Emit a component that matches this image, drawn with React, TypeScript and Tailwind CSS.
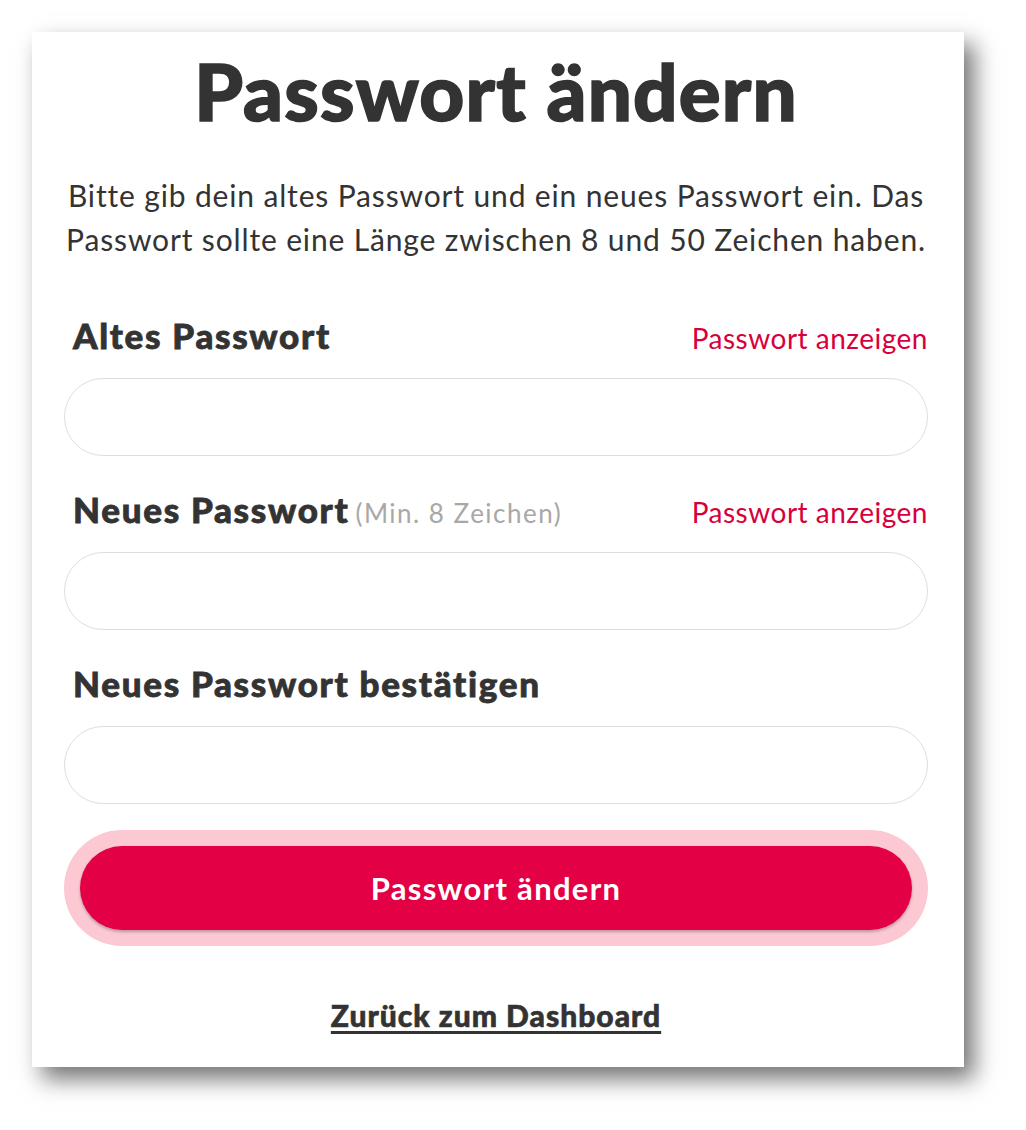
import React from 'react';

const font = { fontFamily: 'Lato, "Noto Sans", sans-serif' };

interface FieldProps {
  label: string;
  hint?: string;
  showToggle?: boolean;
}

const PasswordField: React.FC<FieldProps> = ({ label, hint, showToggle }) => {
  return (
    <div className="flex flex-col">
      <div className="flex items-baseline justify-between pl-[9px] h-[40px]">
        <div className="leading-[40px] whitespace-nowrap">
          <span className="text-[35px] font-black text-[#333] tracking-[1.7px] [-webkit-text-stroke:0.8px_#333]">
            {label}
          </span>
          {hint && <span className="ml-[6px] text-[26px] text-[#a8a8a8] tracking-[1.5px]">{hint}</span>}
        </div>
        {showToggle && (
          <button type="button" className="text-[28px] leading-[40px] text-[#d8003c] tracking-[0.5px]">
            Passwort anzeigen
          </button>
        )}
      </div>
      <input
        type="password"
        className="mt-[23px] h-[78px] w-full rounded-full border border-[#dedede] bg-white px-8 text-[26px] outline-none"
      />
    </div>
  );
};

export default function App() {
  return (
    <div className="min-h-screen bg-white p-8" style={font}>
      <div className="w-[932px] h-[1035px] bg-white pl-8 pr-9 pt-[20px] shadow-[10px_12px_22px_rgba(0,0,0,0.55)]">
        <h1 className="text-center text-[78px] leading-[78px] font-black text-[#333] tracking-[1.2px] [-webkit-text-stroke:1.6px_#333]">
          Passwort ändern
        </h1>

        <p className="mt-[43px] text-center text-[30px] leading-[44px] text-[#333] tracking-[0.85px]">
          Bitte gib dein altes Passwort und ein neues Passwort ein. Das Passwort sollte eine Länge zwischen 8 und 50
          Zeichen haben.
        </p>

        <form className="mt-[54px] flex flex-col gap-[33px]" onSubmit={(e) => e.preventDefault()}>
          <PasswordField label="Altes Passwort" showToggle />
          <PasswordField label="Neues Passwort" hint="(Min. 8 Zeichen)" showToggle />
          <PasswordField label="Neues Passwort bestätigen" />

          <div className="-mt-[7px] rounded-full bg-[#fcc9d3] p-4">
            <button
              type="submit"
              className="h-[84px] w-full rounded-full bg-[#e40045] text-[31px] font-bold text-white tracking-[1.3px] shadow-[0_2px_3px_rgba(0,0,0,0.25)]"
            >
              Passwort ändern
            </button>
          </div>
        </form>

        <div className="mt-[47px] text-center leading-[45px]">
          <a
            href="#"
            className="text-[30px] font-black text-[#333] tracking-[1px] underline underline-offset-[4px] decoration-[3px] [-webkit-text-stroke:0.6px_#333]"
          >
            Zurück zum Dashboard
          </a>
        </div>
      </div>
    </div>
  );
}
